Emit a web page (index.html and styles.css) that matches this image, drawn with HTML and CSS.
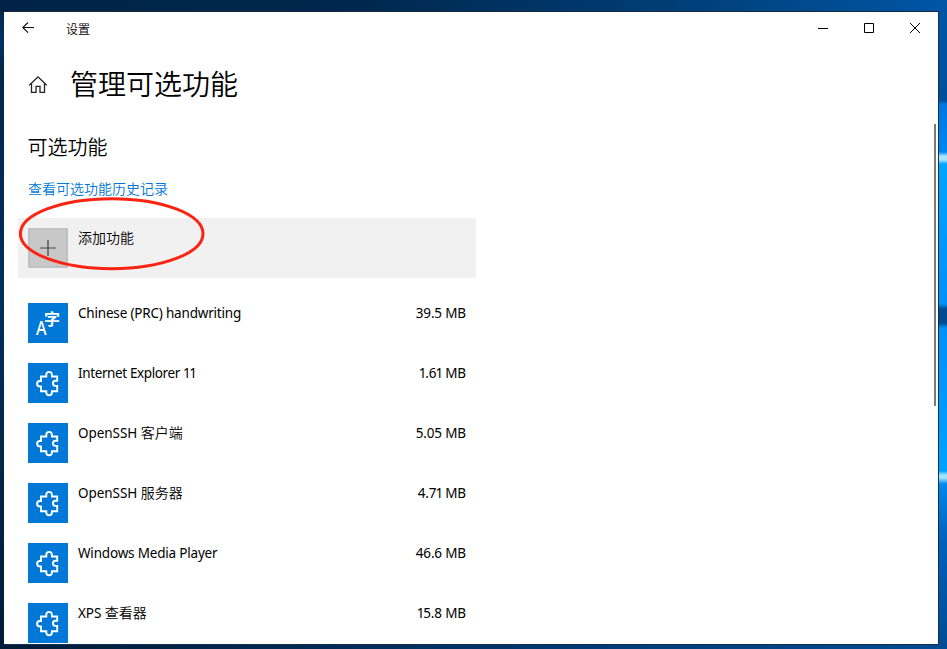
FILE: index.html
```
<!DOCTYPE html>
<html lang="zh-CN">
<head>
<meta charset="utf-8">
<title>设置</title>
<link rel="stylesheet" href="styles.css">
</head>
<body>
<svg class="defs" width="0" height="0">
  <symbol id="puzzle" viewBox="0 0 40 40">
    <path d="M13 13.5H18.3V11.7A2.8 2.8 0 0 1 23.9 11.7V13.5H29.2V17.7H27.5A2.6 2.6 0 0 0 27.5 22.9H29.2V28.2H23.9V29.4A2.8 2.8 0 0 1 18.3 29.4V28.2H13V23.4H11.8A2.7 2.7 0 0 1 11.8 18H13Z" fill="none" stroke="#fff" stroke-width="1.9"/>
  </symbol>
</svg>
<div class="window">
  <header class="titlebar">
    <svg class="back" viewBox="0 0 12 12"><path d="M12 5.5H.8M6 .5L.8 5.5L6 10.7"/></svg>
    <span class="app-name">设置</span>
    <div class="controls">
      <svg viewBox="0 0 46 32"><path d="M18 16.5H28"/></svg>
      <svg viewBox="0 0 46 32"><path d="M18.5 11.5H27.5V20.5H18.5Z"/></svg>
      <svg viewBox="0 0 46 32"><path d="M18 11L28 21M28 11L18 21"/></svg>
    </div>
  </header>
  <div class="page-head">
    <svg class="home" viewBox="0 0 20 20"><path d="M1.3 10.3L10 1.8L18.7 10.3M3.5 8.5V17.4H8V11.4H12V17.4H16.5V8.5"/></svg>
    <h1>管理可选功能</h1>
  </div>
  <main>
    <h2>可选功能</h2>
    <a class="history">查看可选功能历史记录</a>
    <div class="row add">
      <span class="tile plus"><svg viewBox="0 0 40 40"><path d="M12 20H28M20 12V28"/></svg></span>
      <span class="name">添加功能</span>
      <svg class="ring" viewBox="0 0 186 74"><ellipse cx="92.7" cy="36.7" rx="91.3" ry="35"/></svg>
    </div>
    <div class="list">
      <div class="row"><span class="tile lang"><b>A</b><i>字</i></span><span class="name">Chinese (PRC) handwriting</span><span class="size">39.5 MB</span></div>
      <div class="row"><span class="tile"><svg><use href="#puzzle"/></svg></span><span class="name snug">Internet Explorer <span class="ones">11</span></span><span class="size"><span class="one">1</span>.6<span class="one">1</span> MB</span></div>
      <div class="row"><span class="tile"><svg><use href="#puzzle"/></svg></span><span class="name mixed">OpenSSH <em>客户端</em></span><span class="size">5.05 MB</span></div>
      <div class="row"><span class="tile"><svg><use href="#puzzle"/></svg></span><span class="name mixed">OpenSSH <em>服务器</em></span><span class="size">4.7<span class="one">1</span> MB</span></div>
      <div class="row"><span class="tile"><svg><use href="#puzzle"/></svg></span><span class="name">Windows Media Player</span><span class="size">46.6 MB</span></div>
      <div class="row"><span class="tile"><svg><use href="#puzzle"/></svg></span><span class="name mixed">XPS <em>查看器</em></span><span class="size"><span class="one">1</span>5.8 MB</span></div>
    </div>
  </main>
  <div class="scrollbar"></div>
</div>
</body>
</html>
```
FILE: styles.css
```
* { box-sizing: border-box; }
body {
  margin: 0;
  height: 649px;
  padding: 11px 8px 4px 4px;
  overflow: hidden;
  font-family: "Noto Sans", "Noto Sans CJK SC", sans-serif;
  color: #000;
  background:
    linear-gradient(180deg, #0056a4 0, #004f9c 101px, #0076e0 104px, #0087f0 152px, #a8e4ff 156px, #a8e4ff 160px, #00a5ff 164px, #0090f8 304px, #004a91 309px, #004a91 323px, #0090f8 328px, #00a2ff 471px, #a0e4fb 475px, #a0e4fb 478px, #0088ec 484px, #0060ba 540px, #004b93 649px) right 0 top 0 / 9px 649px no-repeat,
    linear-gradient(90deg, #002347 0, #00274d 350px, #003c73 650px, #0056a5 947px) 0 0 / 100% 12px no-repeat,
    linear-gradient(90deg, #001b38 0, #002b58 350px, #003e7c 650px, #004b93 947px) 0 100% / 100% 6px no-repeat,
    linear-gradient(180deg, #002347 0, #003263 42px, #00264c 70px, #00305c 290px, #001b38 649px);
}
.defs { position: absolute; }
svg { display: block; fill: none; }
.window {
  position: relative;
  height: 634px;
  border-top: 1px solid #15283c;
  border-right: 1px solid #12304e;
  border-bottom: 1px solid #12304e;
  background: #fff;
  overflow: hidden;
}
.titlebar { display: flex; align-items: center; height: 32px; padding-left: 18px; }
.back { width: 12px; height: 12px; stroke: #111; stroke-width: 1.1; }
.app-name { margin-left: 32px; padding-top: 1px; font-size: 12px; line-height: 16px; }
.controls { display: flex; margin-left: auto; }
.controls svg { width: 46px; height: 32px; stroke: #000; stroke-width: 1; }
.page-head { display: flex; align-items: center; height: 56px; margin-top: 13px; padding-left: 24px; }
.home { width: 20px; height: 20px; stroke: #222; stroke-width: 1.3; }
h1, h2, .history, .app-name, .add .name, em { font-family: "Noto Sans CJK SC", sans-serif; font-weight: 350; }
h1 { margin: 0 0 0 22px; padding-bottom: 4px; font-size: 28px; line-height: 40px; }
main { padding: 18px 0 0 14px; }
h2 { margin: 0 0 0 9.5px; font-size: 20px; line-height: 32px; }
.history { display: block; margin: 15px 0 20px 10px; font-size: 14px; line-height: 20px; color: #0078d7; }
.row { display: flex; width: 458px; height: 60px; padding: 10px; }
.add { position: relative; background: #f1f1f1; }
.tile { flex: none; width: 40px; height: 40px; background: #0078d7; }
.tile svg { width: 40px; height: 40px; }
.tile.plus { background: #c8c8c8; border: 2px solid #c0c0c0; }
.plus svg { margin: -2px; stroke: #444; stroke-width: 1.2; }
.ring { position: absolute; left: 1px; top: -21px; width: 186px; height: 74px; stroke: #fb2412; stroke-width: 3; }
.name { margin-left: 10px; font-size: 13.5px; line-height: 20px; letter-spacing: -.19px; white-space: nowrap; }
.snug { letter-spacing: -.38px; }
.mixed { letter-spacing: -.05px; }
.ones { letter-spacing: -1.6px; }
.add .name { margin-top: -1px; font-size: 14px; letter-spacing: 0; }
em { font-style: normal; font-size: 14px; letter-spacing: 0; line-height: 1; }
.size { margin-left: auto; font-size: 13.5px; line-height: 20px; letter-spacing: -.15px; }
.one { margin-left: -1px; letter-spacing: -1.2px; }
.list { margin-top: 15px; }
.lang { display: flex; padding: 9px 0 0 8px; color: #fff; }
.lang b { width: 8px; height: 14px; margin-top: 9px; font-size: 19px; font-weight: 500; line-height: 14px; transform: scaleX(.85); transform-origin: left; }
.lang i { height: 15px; font-style: normal; font-size: 16px; font-weight: 700; line-height: 15px; }
.scrollbar { position: absolute; right: 2px; top: 112px; width: 2px; height: 282px; background: #7a7a7a; }
```
